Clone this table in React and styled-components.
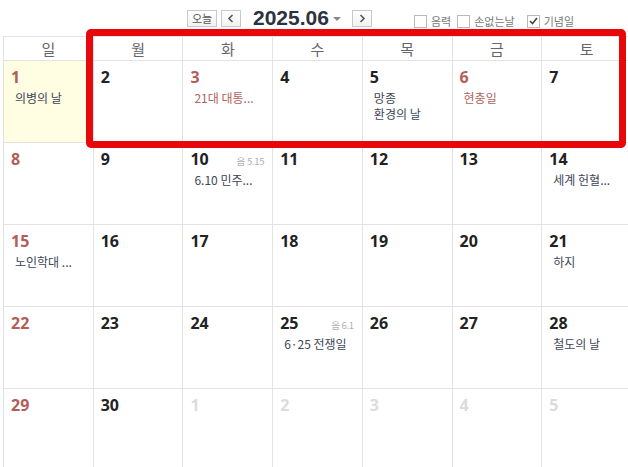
import React from "react";
import styled, { createGlobalStyle } from "styled-components";

const Global = createGlobalStyle`
  html, body { margin: 0; padding: 0; background: #fff; }
  body { font-family: "Noto Sans", "Noto Sans CJK KR", sans-serif; width: 628px; height: 467px; overflow: hidden; }
`;

const Page = styled.div`
  position: relative;
  width: 628px;
  height: 467px;
  overflow: hidden;
  background: #fff;
`;

const Toolbar = styled.div`
  height: 36px;
  display: flex;
  align-items: flex-start;
  padding-top: 9px;
  box-sizing: border-box;
`;

const NavGroup = styled.div`
  display: flex;
  align-items: center;
  margin-left: 187px;
  height: 18px;
`;

const SmallBtn = styled.div`
  box-sizing: border-box;
  height: 17px;
  min-width: ${(p) => p.$w || 20}px;
  border: 1px solid #c9c9c9;
  background: linear-gradient(#fff, #f2f2f2);
  display: flex;
  align-items: center;
  justify-content: center;
  font-size: 11px;
  color: #555;
  margin-right: ${(p) => p.$mr || 0}px;
  font-family: "Noto Sans CJK KR", sans-serif;
`;

const Title = styled.div`
  font-family: "Liberation Sans", "Noto Sans", sans-serif;
  font-weight: 700;
  font-size: 21px;
  color: #2d3240;
  margin: 0 4px 0 12px;
  line-height: 18px;
`;

const Caret = styled.span`
  display: inline-block;
  width: 0;
  height: 0;
  border-left: 4px solid transparent;
  border-right: 4px solid transparent;
  border-top: 4px solid #888;
  margin-right: 11px;
  margin-top: 2px;
`;

const Checks = styled.div`
  display: flex;
  align-items: center;
  margin-left: 42px;
  margin-top: 4px;
`;

const CheckItem = styled.label`
  display: flex;
  align-items: center;
  font-family: "Noto Sans CJK KR", sans-serif;
  font-size: 11px;
  color: #777;
  margin-right: ${(p) => p.$mr || 6}px;
`;

const Box = styled.span`
  box-sizing: border-box;
  width: 13px;
  height: 13px;
  border: 1px solid #b9b9b9;
  background: #fff;
  margin-right: 4px;
  display: flex;
  align-items: center;
  justify-content: center;
`;

const Grid = styled.div`
  margin-left: 3px;
  width: 628px;
  display: grid;
  grid-template-columns: repeat(7, 1fr);
  border-top: 1px solid #e3e3e3;
  border-left: 1px solid #e3e3e3;
`;

const DayName = styled.div`
  height: 23px;
  border-right: 1px solid #e3e3e3;
  border-bottom: 1px solid #e3e3e3;
  display: flex;
  align-items: center;
  justify-content: center;
  font-family: "Noto Sans CJK KR", sans-serif;
  font-size: 15px;
  color: #666;
`;

const Cell = styled.div`
  height: 76px;
  border-right: 1px solid #e3e3e3;
  border-bottom: 1px solid #e3e3e3;
  background: ${(p) => (p.$today ? "#fffde2" : "#fff")};
  padding: 5px 8px 0 7px;
  box-sizing: content-box;
`;

const Top = styled.div`
  display: flex;
  justify-content: space-between;
  align-items: baseline;
  height: 22px;
`;

const Num = styled.span`
  font-family: "Noto Sans", sans-serif;
  font-weight: 700;
  font-size: 16px;
  color: ${(p) => (p.$other ? "#dcdcdc" : p.$red ? "#b35d57" : "#222")};
`;

const Lunar = styled.span`
  font-family: "Noto Sans CJK KR", sans-serif;
  font-size: 9.5px;
  color: #b0b0b0;
  letter-spacing: -0.3px;
`;

const Events = styled.div`
  margin-top: 2px;
  padding-left: 4px;
`;

const Event = styled.div`
  font-family: "Noto Sans CJK KR", sans-serif;
  font-size: 12px;
  line-height: 16px;
  color: ${(p) => (p.$red ? "#b0645d" : "#3d4558")};
  white-space: nowrap;
`;

const Highlight = styled.div`
  position: absolute;
  left: 86px;
  top: 29px;
  width: 540px;
  height: 119px;
  box-sizing: border-box;
  border: 7px solid #e8080c;
  border-radius: 5px;
  pointer-events: none;
`;

const days = ["일", "월", "화", "수", "목", "금", "토"];

const cells = [
  { n: 1, red: true, today: true, ev: ["의병의 날"] },
  { n: 2 },
  { n: 3, red: true, ev: ["21대 대통..."], evRed: true },
  { n: 4 },
  { n: 5, ev: ["망종", "환경의 날"] },
  { n: 6, red: true, ev: ["현충일"], evRed: true },
  { n: 7 },
  { n: 8, red: true },
  { n: 9 },
  { n: 10, lunar: "음 5.15", ev: ["6.10 민주..."] },
  { n: 11 },
  { n: 12 },
  { n: 13 },
  { n: 14, ev: ["세계 헌혈..."] },
  { n: 15, red: true, ev: ["노인학대 ..."] },
  { n: 16 },
  { n: 17 },
  { n: 18 },
  { n: 19 },
  { n: 20 },
  { n: 21, ev: ["하지"] },
  { n: 22, red: true },
  { n: 23 },
  { n: 24 },
  { n: 25, lunar: "음 6.1", ev: ["6·25 전쟁일"] },
  { n: 26 },
  { n: 27 },
  { n: 28, ev: ["철도의 날"] },
  { n: 29, red: true },
  { n: 30 },
  { n: 1, other: true },
  { n: 2, other: true },
  { n: 3, other: true },
  { n: 4, other: true },
  { n: 5, other: true },
];

const Check = ({ checked, label, mr }) => (
  <CheckItem $mr={mr}>
    <Box>
      {checked && (
        <svg width="9" height="8" viewBox="0 0 9 8">
          <path d="M1 4 L3.5 6.5 L8 1" fill="none" stroke="#444" strokeWidth="1.6" />
        </svg>
      )}
    </Box>
    {label}
  </CheckItem>
);

export default function App() {
  return (
    <Page>
      <Global />
      <Toolbar>
        <NavGroup>
          <SmallBtn $w={30} $mr={4}>오늘</SmallBtn>
          <SmallBtn $w={20}>
            <svg width="8" height="9" viewBox="0 0 8 9">
              <path d="M5.5 1 L2 4.5 L5.5 8" fill="none" stroke="#555" strokeWidth="1.6" />
            </svg>
          </SmallBtn>
          <Title>2025.06</Title>
          <Caret />
          <SmallBtn $w={20}>
            <svg width="8" height="9" viewBox="0 0 8 9">
              <path d="M2.5 1 L6 4.5 L2.5 8" fill="none" stroke="#555" strokeWidth="1.6" />
            </svg>
          </SmallBtn>
        </NavGroup>
        <Checks>
          <Check label="음력" />
          <Check label="손없는날" mr={12} />
          <Check label="기념일" checked />
        </Checks>
      </Toolbar>
      <Grid>
        {days.map((d) => (
          <DayName key={d}>{d}</DayName>
        ))}
        {cells.map((c, i) => (
          <Cell key={i} $today={c.today}>
            <Top>
              <Num $red={c.red} $other={c.other}>{c.n}</Num>
              {c.lunar && <Lunar>{c.lunar}</Lunar>}
            </Top>
            {c.ev && (
              <Events>
                {c.ev.map((e, j) => (
                  <Event key={j} $red={c.evRed}>
                    {e}
                  </Event>
                ))}
              </Events>
            )}
          </Cell>
        ))}
      </Grid>
      <Highlight />
    </Page>
  );
}
